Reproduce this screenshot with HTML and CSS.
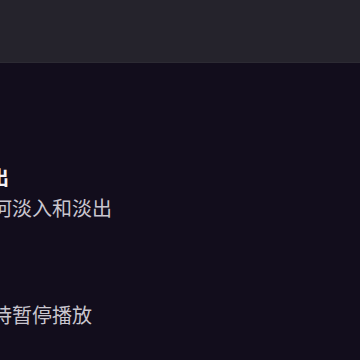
FILE: index.html
```html
<!DOCTYPE html>
<html lang="zh-CN">
<head>
    <meta charset="UTF-8">
    <meta name="viewport" content="width=device-width, initial-scale=1.0">
    <title>设置</title>
    <link rel="stylesheet" href="styles.css">
</head>
<body>
    <header class="toolbar"></header>
    <main class="settings">
        <div class="pref">
            <div class="pref-title">交叉淡入淡出</div>
            <div class="pref-summary">设置音乐如何淡入和淡出</div>
        </div>
        <div class="pref">
            <div class="pref-title">暂停</div>
            <div class="pref-summary">来电时仍保持暂停播放</div>
        </div>
    </main>
</body>
</html>
```

FILE: styles.css
```css
html, body {
    margin: 0;
    padding: 0;
    height: 100%;
}
body {
    background-color: #120d1c;
    overflow: hidden;
    font-family: "Noto Sans CJK SC", "Noto Sans", sans-serif;
}
.toolbar {
    height: 62px;
    background-color: #25232c;
    border-bottom: 1px solid #2c2a33;
}
.settings {
    margin-left: -108px;
    padding-top: 76px;
    white-space: nowrap;
}
.pref {
    padding: 24px 0 25px;
}
.pref-title {
    font-size: 19.5px;
    line-height: 28px;
    font-weight: bold;
    color: #f2f0f5;
}
.pref-summary {
    margin-top: 4px;
    font-size: 20px;
    line-height: 26px;
    color: #c9c6cf;
}
```
